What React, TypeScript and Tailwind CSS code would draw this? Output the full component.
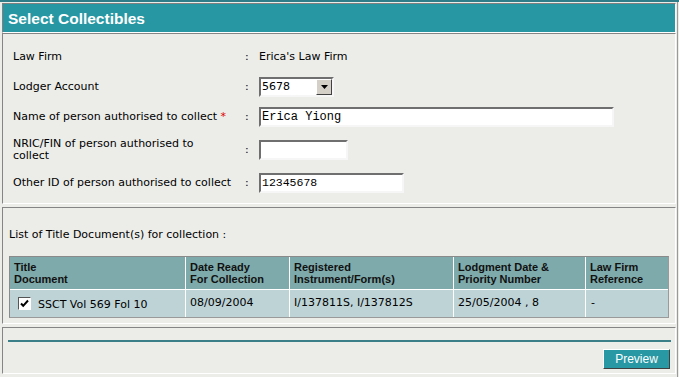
import React from "react";

const inset = "border-2 border-t-[#6f6f6f] border-l-[#6f6f6f] border-b-[#f6f6f6] border-r-[#f6f6f6]";
const panel = "border border-t-[#858585] border-l-[#858585] border-b-white border-r-white bg-[#ecede9]";

const FormRow = ({ label, h, children }: { label: React.ReactNode; h: string; children?: React.ReactNode }) => (
  <div className={`flex items-center ${h}`}>
    <div className="w-[232px] leading-[12px]">{label}</div>
    <div className="w-[14px]">:</div>
    <div className="flex items-center">{children}</div>
  </div>
);

const columns = [
  { head: ["Title", "Document"] },
  { head: ["Date Ready", "For Collection"] },
  { head: ["Registered", "Instrument/Form(s)"] },
  { head: ["Lodgment Date &", "Priority Number"] },
  { head: ["Law Firm", "Reference"] },
];

export default function App() {
  return (
    <div className="w-[679px] h-[377px] overflow-hidden bg-[#ecede9] text-[11px] text-black font-['DejaVu_Sans',sans-serif]">
      {/* top strip */}
      <div className="h-[2px] bg-[#2f7d88]" />
      <div className="w-[678px] h-[375px] border-r border-[#9a9a9a] pl-[2px] pr-[1px] pt-px">
        {/* Title bar */}
        <div className="h-[30px] border border-t-[#808080] border-l-[#808080] border-b-white border-r-white bg-[#2797a3] pl-[5px] pt-[6px]">
          <div className="text-white font-bold text-[15.5px] leading-[17px] font-['Liberation_Sans',sans-serif]">
            Select Collectibles
          </div>
        </div>

        {/* Details panel */}
        <div className={`${panel} h-[171px] pl-[10px] pt-[8px]`}>
          <FormRow label="Law Firm" h="h-[30px]">
            <span>Erica's Law Firm</span>
          </FormRow>
          <FormRow label="Lodger Account" h="h-[30px]">
            <div className={`${inset} w-[75px] h-[20px] bg-white flex items-center justify-between`}>
              <span className="pl-[1px]">5678</span>
              <div className="w-[16px] h-[16px] bg-[#d4d0c8] border border-t-white border-l-white border-b-[#404040] border-r-[#404040] flex items-center justify-center">
                <svg width="7" height="4" viewBox="0 0 7 4">
                  <path d="M0 0h7L3.5 4z" fill="#000" />
                </svg>
              </div>
            </div>
          </FormRow>
          <FormRow
            label={
              <span>
                Name of person authorised to collect <span className="text-[#e00000]">*</span>
              </span>
            }
            h="h-[30px]"
          >
            <div className={`${inset} w-[355px] h-[20px] bg-white pl-px text-[12px] leading-[16px] font-['Liberation_Mono',monospace]`}>
              Erica Yiong
            </div>
          </FormRow>
          <FormRow
            label={
              <span>
                NRIC/FIN of person authorised to
                <br />
                collect
              </span>
            }
            h="h-[36px]"
          >
            <div className={`${inset} w-[89px] h-[20px] bg-white`} />
          </FormRow>
          <FormRow label="Other ID of person authorised to collect" h="h-[30px]">
            <div className={`${inset} w-[145px] h-[20px] bg-white pl-px text-[11.5px] leading-[16px] font-['Liberation_Mono',monospace]`}>
              12345678
            </div>
          </FormRow>
        </div>

        {/* List panel */}
        <div className={`${panel} h-[117px] mt-[3px] px-[6px] pt-[20px]`}>
          <div className="leading-[13px]">List of Title Document(s) for collection :</div>
          <div className="mt-[15px] border border-t-[#8a8a8a] border-l-[#8a8a8a] border-b-[#9a9a9a] border-r-[#9a9a9a] bg-white">
            <div className="grid grid-cols-[175px_103px_163px_131px_82px] gap-px">
              {columns.map((c) => (
                <div
                  key={c.head[0]}
                  className="h-[32px] bg-[#7eaaab] pl-[4px] pt-[4px] font-bold leading-[12px] font-['Liberation_Sans',sans-serif] text-[#111]"
                >
                  {c.head[0]}
                  <br />
                  {c.head[1]}
                </div>
              ))}
              <div className="h-[27px] bg-[#bdd3d6] flex items-center pl-[8px]">
                <div className="w-[13px] h-[13px] border border-t-[#555] border-l-[#555] border-b-white border-r-white bg-white flex items-center justify-center">
                  <svg width="9" height="9" viewBox="0 0 9 9">
                    <path d="M1 4.5l2.2 2.3L8 1.5" stroke="#000" strokeWidth="2" fill="none" />
                  </svg>
                </div>
                <span className="ml-[7px] mt-[3px]">SSCT Vol 569 Fol 10</span>
              </div>
              <div className="h-[27px] bg-[#bdd3d6] flex items-center pl-[4px]">08/09/2004</div>
              <div className="h-[27px] bg-[#bdd3d6] flex items-center pl-[4px]">I/137811S, I/137812S</div>
              <div className="h-[27px] bg-[#bdd3d6] flex items-center pl-[4px]">25/05/2004 , 8</div>
              <div className="h-[27px] bg-[#bdd3d6] flex items-center pl-[5px]">-</div>
            </div>
          </div>
        </div>

        {/* Actions panel */}
        <div className={`${panel} h-[47px] mt-[3px] px-[5px] pt-[12px]`}>
          <div className="h-[2px] bg-[#3b7f89] mr-[-1px]" />
          <div className="flex justify-end mt-[7px]">
            <button className="w-[67px] h-[20px] bg-[#2898a4] border border-t-white border-l-white border-b-[#404040] border-r-[#404040] text-white text-[12px] leading-[16px] font-['Liberation_Sans',sans-serif]">
              Preview
            </button>
          </div>
        </div>
      </div>
    </div>
  );
}
